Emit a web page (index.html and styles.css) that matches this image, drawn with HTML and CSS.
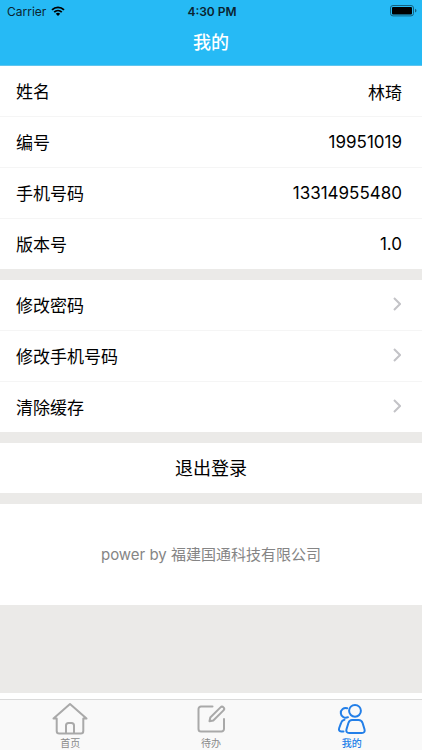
FILE: index.html
```
<!DOCTYPE html>
<html lang="zh-CN">
<head>
<meta charset="utf-8">
<meta name="viewport" content="width=device-width, initial-scale=1">
<title>我的</title>
<link rel="stylesheet" href="styles.css">
</head>
<body>
<header class="header">
  <div class="status">
    <div class="carrier">
      <span>Carrier</span>
      <svg class="wifi" viewBox="0 0 14 10" aria-hidden="true">
        <path d="M1 3.9a8.6 8.6 0 0 1 12 0M3.2 6.1a5.5 5.5 0 0 1 7.6 0" fill="none" stroke="currentColor" stroke-width="1.8"/>
        <path d="M4.8 7.7a3.2 3.2 0 0 1 4.4 0L7 10z" fill="currentColor"/>
      </svg>
    </div>
    <time class="clock">4:30 PM</time>
    <svg class="battery" viewBox="0 0 27 12" aria-hidden="true">
      <rect x=".5" y=".5" width="23" height="10.4" rx="2.5" fill="none" stroke="#14617f"/>
      <rect x="2" y="2" width="20" height="7.4" rx="1" fill="#000"/>
      <path d="M25 3.8c2 .6 2 3.2 0 3.8z" fill="#14617f"/>
    </svg>
  </div>
  <h1 class="title">我的</h1>
</header>
<main class="content">
  <dl class="group">
    <div class="row"><dt>姓名</dt><dd>林琦</dd></div>
    <div class="row"><dt>编号</dt><dd>19951019</dd></div>
    <div class="row"><dt>手机号码</dt><dd>13314955480</dd></div>
    <div class="row"><dt>版本号</dt><dd>1.0</dd></div>
  </dl>
  <nav class="group">
    <a class="row link" href="#password">修改密码<svg class="chevron" viewBox="0 0 8 14" aria-hidden="true"><path d="M1 1l6 6-6 6"/></svg></a>
    <a class="row link" href="#phone">修改手机号码<svg class="chevron" viewBox="0 0 8 14" aria-hidden="true"><path d="M1 1l6 6-6 6"/></svg></a>
    <a class="row link" href="#cache">清除缓存<svg class="chevron" viewBox="0 0 8 14" aria-hidden="true"><path d="M1 1l6 6-6 6"/></svg></a>
  </nav>
  <button class="logout" type="button">退出登录</button>
  <p class="power">power by 福建国通科技有限公司</p>
</main>
<nav class="tabs">
  <a class="tab" href="#home">
    <svg class="icon" viewBox="0 0 36 34" aria-hidden="true">
      <path d="M1.500 16.500L18 2l16.500 14.500h-3.200V29a2.500 2.500 0 0 1-2.500 2.500H7.200A2.500 2.500 0 0 1 4.700 29V16.500z"/>
      <path d="M14 31V23.500a2.500 2.500 0 0 1 2.500-2.500h3a2.500 2.500 0 0 1 2.500 2.500V31"/>
    </svg>
    <span>首页</span>
  </a>
  <a class="tab" href="#todo">
    <svg class="icon" viewBox="0 0 36 34" aria-hidden="true">
      <path d="M19.500 4.500H8A2.500 2.500 0 0 0 5.500 7v20A2.500 2.500 0 0 0 8 29.500h20.500A2.500 2.500 0 0 0 31 27V17"/>
      <path d="M17.300 15.500L27.500 5.400a2.100 2.100 0 0 1 3 3L20.300 18.500l-3.800.8z"/>
    </svg>
    <span>待办</span>
  </a>
  <a class="tab active" href="#me" aria-current="page">
    <svg class="icon" viewBox="0 0 36 34" aria-hidden="true">
      <circle cx="21" cy="8.800" r="5.900"/>
      <path d="M18 18h6.500c2.200 0 3.400 1 4.100 3l1.900 6.200c.7 2.400-.4 3.800-2.700 3.800H15.200c-2.300 0-3.400-1.400-2.700-3.800L14.400 21c.7-2 1.900-3 3.600-3z"/>
      <path d="M13.200 6.200a4.900 4.900 0 1 0 .8 9M10.500 17.800C8.700 18.200 7.700 19 7.100 20.800L5.200 26c-.7 2.100.1 3.500 2 3.500h2.300"/>
    </svg>
    <span>我的</span>
  </a>
</nav>
</body>
</html>
```
FILE: styles.css
```
* {
  box-sizing: border-box;
}

body {
  margin: 0;
  min-height: 100vh;
  display: flex;
  flex-direction: column;
  background: #fff;
  color: #000;
  font-family: Inter, "Noto Sans CJK SC", sans-serif;
  font-size: 17px;
}

a {
  color: inherit;
  text-decoration: none;
}

.header {
  height: 66px;
  background: #26baf5;
  border-bottom: 1px solid #5fc5ee;
}

.status {
  display: grid;
  grid-template-columns: 1fr auto 1fr;
  align-items: center;
  height: 22px;
  padding: 0 5px 0 7px;
  font-size: 12px;
  color: #0b2430;
}

.carrier {
  display: flex;
  align-items: center;
  gap: 5px;
}

.wifi {
  width: 14px;
  height: 10px;
  color: #000;
}

.clock {
  font-weight: 600;
}

.battery {
  justify-self: end;
  width: 27px;
  height: 12px;
}

.title {
  margin: 0;
  color: #fff;
  font-size: 18px;
  font-weight: 500;
  line-height: 42px;
  text-align: center;
}

.content {
  flex: 1;
  display: flex;
  flex-direction: column;
  gap: 11px;
  margin-bottom: 6px;
  background: #ebeae8;
}

.group {
  margin: 0;
  background: #fff;
}

.row {
  display: flex;
  align-items: center;
  justify-content: space-between;
  height: 50px;
  padding: 0 20px 0 16px;
}

.row + .row {
  height: 51px;
  border-top: 1px solid #f5f5f5;
}

.row dt {
  padding-bottom: 2px;
}

.row dd {
  margin: 0;
}

.link {
  padding: 0 21px 2px 16px;
}

.chevron {
  width: 8px;
  height: 14px;
  fill: none;
  stroke: #c3c3c7;
  stroke-width: 2;
}

.logout {
  height: 50px;
  padding: 0 0 2px;
  border: 0;
  background: #fff;
  color: #000;
  font: inherit;
  font-size: 18px;
}

.power {
  margin: 0;
  padding: 39px 0 38px;
  background: #fff;
  color: #858585;
  font-size: 15px;
  line-height: 24px;
  text-align: center;
}

.tabs {
  display: flex;
  height: 51px;
  background: #f9f9f9;
  border-top: 1px solid #dadada;
}

.tab {
  flex: 1;
  display: flex;
  flex-direction: column;
  align-items: center;
  padding-top: 2px;
  color: #8a8a8a;
  font-size: 10px;
  line-height: 14px;
}

.icon {
  width: 36px;
  height: 34px;
  fill: none;
  stroke: #a9a9a9;
  stroke-width: 2;
  stroke-linejoin: round;
  stroke-linecap: round;
}

.active {
  color: #237fe8;
  font-weight: 500;
}

.active .icon {
  stroke: #237fe8;
}
```
